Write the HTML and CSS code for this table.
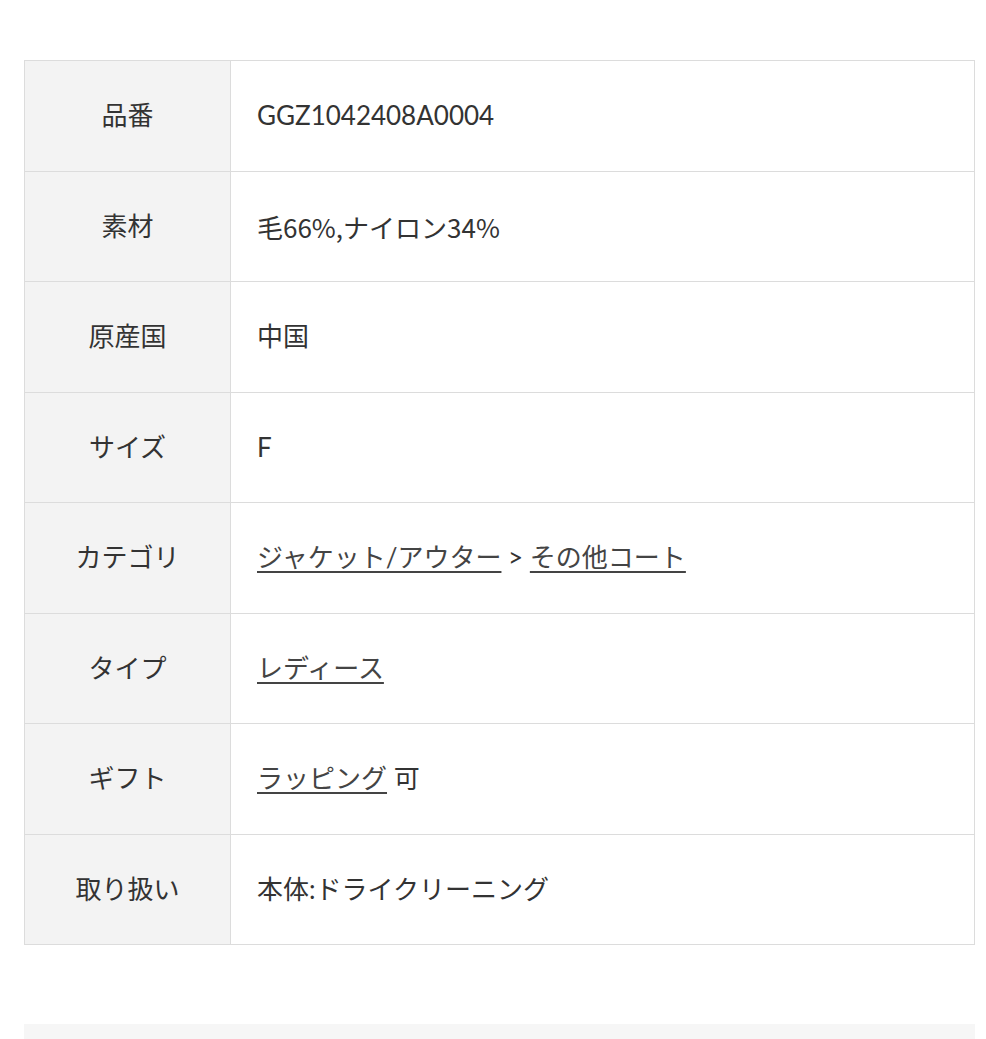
FILE: index.html
```html
<!DOCTYPE html>
<html lang="ja">
<head>
<meta charset="utf-8">
<link rel="stylesheet" href="styles.css">
</head>
<body>
<div class="page">
  <table class="spec">
    <tbody>
      <tr><th>品番</th><td>GGZ1042408A0004</td></tr>
      <tr><th>素材</th><td class="jp">毛66%,ナイロン34%</td></tr>
      <tr><th>原産国</th><td>中国</td></tr>
      <tr><th>サイズ</th><td>F</td></tr>
      <tr><th>カテゴリ</th><td><a href="#">ジャケット/アウター</a> &gt; <a href="#">その他コート</a></td></tr>
      <tr><th>タイプ</th><td><a href="#">レディース</a></td></tr>
      <tr><th>ギフト</th><td><a href="#">ラッピング</a> 可</td></tr>
      <tr><th>取り扱い</th><td>本体:ドライクリーニング</td></tr>
    </tbody>
  </table>
  <div class="next-box"></div>
</div>
</body>
</html>
```

FILE: styles.css
```css
html, body {
  margin: 0;
  padding: 0;
  background: #fff;
}
body {
  font-family: Lato, "Noto Sans CJK JP", sans-serif;
  color: #333;
  font-size: 26px;
}
.page {
  padding: 60px 11px 0 24px;
}
.spec {
  width: 100%;
  border-collapse: collapse;
  border: 1px solid #dcdcdc;
}
.spec th,
.spec td {
  border: 1px solid #dcdcdc;
  height: 109.5px;
  padding: 0;
  vertical-align: middle;
  font-weight: normal;
  line-height: 1.2;
}
.spec th {
  width: 205px;
  background: #f3f3f3;
  text-align: center;
}
.spec td {
  text-align: left;
  padding-left: 26px;
  background: #fff;
}
.spec td.jp {
  font-family: "Noto Sans CJK JP", sans-serif;
}
.spec a {
  color: #444;
  text-decoration: underline;
  text-decoration-thickness: 2px;
  text-underline-offset: 4px;
}
.next-box {
  margin-top: 79px;
  height: 20px;
  background: #f6f6f6;
}
```
